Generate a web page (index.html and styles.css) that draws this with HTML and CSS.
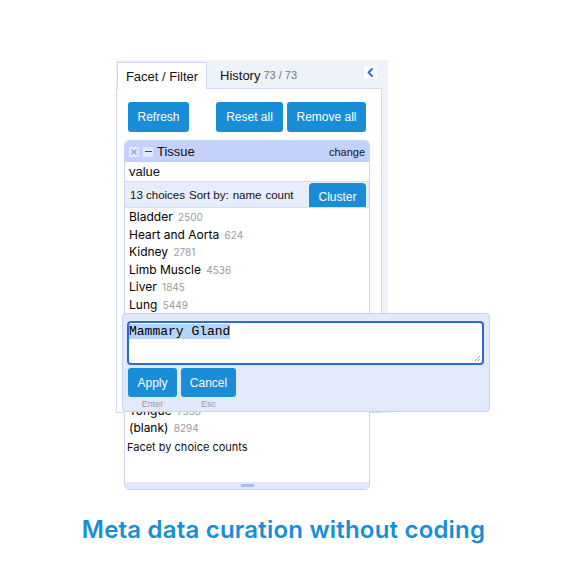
FILE: index.html
```html
<!DOCTYPE html>
<html>
<head>
<meta charset="utf-8">
<link rel="stylesheet" href="styles.css">
</head>
<body>
<div class="page">
  <div class="panel">
    <div class="tabbar">
      <div class="tab active">Facet / Filter</div>
      <div class="tab">History <span class="tab-count">73 / 73</span></div>
      <div class="collapse">
        <svg width="13" height="13" viewBox="0 0 13 13"><path d="M8 3 L4.5 6.5 L8 10" fill="none" stroke="#2d6fe0" stroke-width="2" stroke-linecap="round" stroke-linejoin="round"/></svg>
      </div>
    </div>
    <div class="content">
      <div class="toolbar">
        <button class="btn">Refresh</button>
        <div class="toolbar-right">
          <button class="btn">Reset all</button>
          <button class="btn">Remove all</button>
        </div>
      </div>
      <div class="facet">
        <div class="facet-head">
          <span class="icon-x">
            <svg width="10" height="10" viewBox="0 0 10 10"><path d="M2.5 2.5 L7.5 7.5 M7.5 2.5 L2.5 7.5" stroke="#8fa3d8" stroke-width="1.4"/></svg>
          </span>
          <span class="icon-min"><span class="dash"></span></span>
          <span class="facet-title">Tissue</span>
          <span class="facet-change">change</span>
        </div>
        <div class="facet-expr">value</div>
        <div class="facet-sort">
          <span>13 choices</span>
          <span>Sort by:</span>
          <span>name</span>
          <span>count</span>
          <button class="cluster">Cluster</button>
        </div>
        <ul class="choices">
          <li>Bladder <span class="cnt">2500</span></li>
          <li>Heart and Aorta <span class="cnt">624</span></li>
          <li>Kidney <span class="cnt">2781</span></li>
          <li>Limb Muscle <span class="cnt">4536</span></li>
          <li>Liver <span class="cnt">1845</span></li>
          <li>Lung <span class="cnt">5449</span></li>
          <li>Mammary Gland <span class="cnt">3412</span></li>
          <li>Pancreas <span class="cnt">1961</span></li>
          <li>Skin <span class="cnt">3977</span></li>
          <li>Spleen <span class="cnt">1697</span></li>
          <li>Thymus <span class="cnt">1569</span></li>
          <li>Tongue <span class="cnt">7538</span></li>
          <li>(blank) <span class="cnt">8294</span></li>
        </ul>
        <div class="facet-foot">Facet by choice counts</div>
        <div class="facet-resize"><span class="grip"></span></div>
      </div>
    </div>
  </div>

  <div class="popup">
    <div class="editbox"><span class="sel">Mammary Gland</span>
      <svg class="resizer" width="7" height="7" viewBox="0 0 7 7"><path d="M6 1 L1 6 M6 4 L4 6" stroke="#9aa3b5" stroke-width="1"/></svg>
    </div>
    <div class="popup-actions">
      <div class="action">
        <button class="btn btn-sm">Apply</button>
        <span class="hint">Enter</span>
      </div>
      <div class="action">
        <button class="btn btn-sm">Cancel</button>
        <span class="hint">Esc</span>
      </div>
    </div>
  </div>

  <h1 class="caption">Meta data curation without coding</h1>
</div>
</body>
</html>
```

FILE: styles.css
```css
* { box-sizing: border-box; }
html, body { margin: 0; padding: 0; background: #ffffff; }
.page {
  position: relative;
  width: 567px;
  height: 567px;
  padding-top: 60px;
  font-family: "Liberation Sans", Arial, sans-serif;
  color: #111;
}
.panel {
  margin-left: 116px;
  width: 272px;
  height: 353px;
  background: #eef2f9;
}
.tabbar {
  display: flex;
  align-items: flex-end;
  height: 28px;
  padding-left: 1px;
}
.tab {
  height: 26px;
  display: flex;
  align-items: center;
  font-size: 13px;
  color: #111;
  white-space: nowrap;
}
.tab.active {
  width: 90px;
  justify-content: center;
  background: #ffffff;
  border: 1px solid #cbd7f3;
  border-bottom: none;
  margin-bottom: -1px;
  height: 27px;
  position: relative;
  z-index: 1;
}
.tab + .tab { margin-left: 13px; }
.tab-count { font-size: 11px; color: #777; margin-left: 3px; }
.collapse {
  margin-left: auto;
  margin-right: 11px;
  align-self: flex-start;
  margin-top: 6px;
  width: 13px;
  height: 13px;
  background: #fff;
  border-radius: 2px;
  display: flex;
}
.content {
  width: 266px;
  height: 325px;
  background: #ffffff;
  border: 1px solid #cfdaf3;
  padding: 13px 0 0 7px;
}
.toolbar {
  display: flex;
  padding-left: 4px;
  width: 242px;
}
.toolbar-right { margin-left: auto; display: flex; gap: 4px; }
.btn {
  font-family: "Liberation Sans", Arial, sans-serif;
  font-size: 12px;
  color: #ffffff;
  background: #1a8dd7;
  border: none;
  border-radius: 3px;
  height: 30px;
  padding: 0;
  white-space: nowrap;
}
.toolbar .btn:first-child { width: 61px; }
.toolbar-right .btn:first-child { width: 67px; }
.toolbar-right .btn:last-child { width: 79px; }

.facet {
  margin-top: 8px;
  width: 246px;
  height: 350px;
  border: 1px solid #c7d4f6;
  border-radius: 5px;
  background: #fff;
  display: flex;
  flex-direction: column;
  position: relative;
}
.facet-head {
  height: 21px;
  background: #c4d2fb;
  border-radius: 4px 4px 0 0;
  display: flex;
  align-items: center;
  padding: 0 4px 0 4px;
}
.icon-x, .icon-min {
  width: 10px;
  height: 10px;
  background: #e3e9fd;
  display: flex;
  align-items: center;
  justify-content: center;
}
.icon-min { margin-left: 4px; }
.dash { width: 7px; height: 1.5px; background: #444; }
.facet-title { font-size: 13px; margin-left: 4px; color: #111; }
.facet-change { margin-left: auto; font-size: 11px; color: #111; }
.facet-expr {
  height: 20px;
  font-size: 13px;
  padding-left: 4px;
  display: flex;
  align-items: center;
  border-bottom: 1px solid #d4def8;
}
.facet-sort {
  height: 26px;
  background: #e7edfc;
  display: flex;
  align-items: center;
  font-size: 11.5px;
  padding-left: 5px;
  gap: 4px;
  white-space: nowrap;
  border-bottom: 1px solid #d4def8;
}
.facet-sort span { flex: none; }
.cluster {
  margin-left: auto;
  margin-right: 3px;
  align-self: flex-end;
  flex: none;
  height: 24px;
  width: 57px;
  background: #1a8dd7;
  color: #fff;
  border: none;
  border-radius: 4px 4px 0 0;
  font-family: "Liberation Sans", Arial, sans-serif;
  font-size: 12px;
  padding: 3px 0 0;
}
.choices {
  list-style: none;
  margin: 0;
  padding: 0 0 0 4px;
  font-family: Inter, "Liberation Sans", sans-serif;
  font-size: 12px;
  font-weight: 400;
  color: #000;
}
.choices li { height: 17.6px; line-height: 17.6px; }
.cnt { font-size: 10px; color: #9a9a9a; font-weight: 400; margin-left: 2px; }
.facet-foot {
  font-family: Inter, "Liberation Sans", sans-serif;
  font-size: 11px;
  padding-left: 2px;
  line-height: 20px;
}
.facet-resize {
  margin-top: auto;
  height: 7px;
  background: #dfe7fc;
  border-radius: 0 0 4px 4px;
  display: flex;
  justify-content: center;
  align-items: center;
}
.grip { width: 13px; height: 3px; background: #a9bdf0; }

.popup {
  position: absolute;
  left: 122px;
  top: 313px;
  width: 368px;
  height: 99px;
  background: #e3e9fd;
  border: 1px solid #c5d2f5;
  border-radius: 4px;
  padding: 7px 5px 0 4px;
}
.editbox {
  position: relative;
  height: 44px;
  background: #fff;
  border: 2px solid #2d6bd1;
  border-radius: 4px;
  padding: 1px 0 0 0;
  font-family: "Liberation Mono", "DejaVu Sans Mono", monospace;
  font-size: 13px;
  line-height: 15px;
}
.sel { background: #b5d3f6; color: #000; }
.resizer { position: absolute; right: 1px; bottom: 1px; }
.popup-actions { display: flex; gap: 4px; margin-top: 3px; padding-left: 1px; }
.action { display: flex; flex-direction: column; align-items: center; }
.btn-sm { height: 29px; padding: 0; }
.action:first-child .btn-sm { width: 49px; }
.action:last-child .btn-sm { width: 55px; }
.hint { font-size: 9px; color: #999; margin-top: 2px; }

.caption {
  position: absolute;
  left: 0;
  right: 0;
  top: 515px;
  margin: 0;
  text-align: center;
  font-family: Inter, "Open Sans", sans-serif;
  font-weight: 600;
  font-size: 24px;
  color: #1a8dd7;
  letter-spacing: 0.2px;
}
```
